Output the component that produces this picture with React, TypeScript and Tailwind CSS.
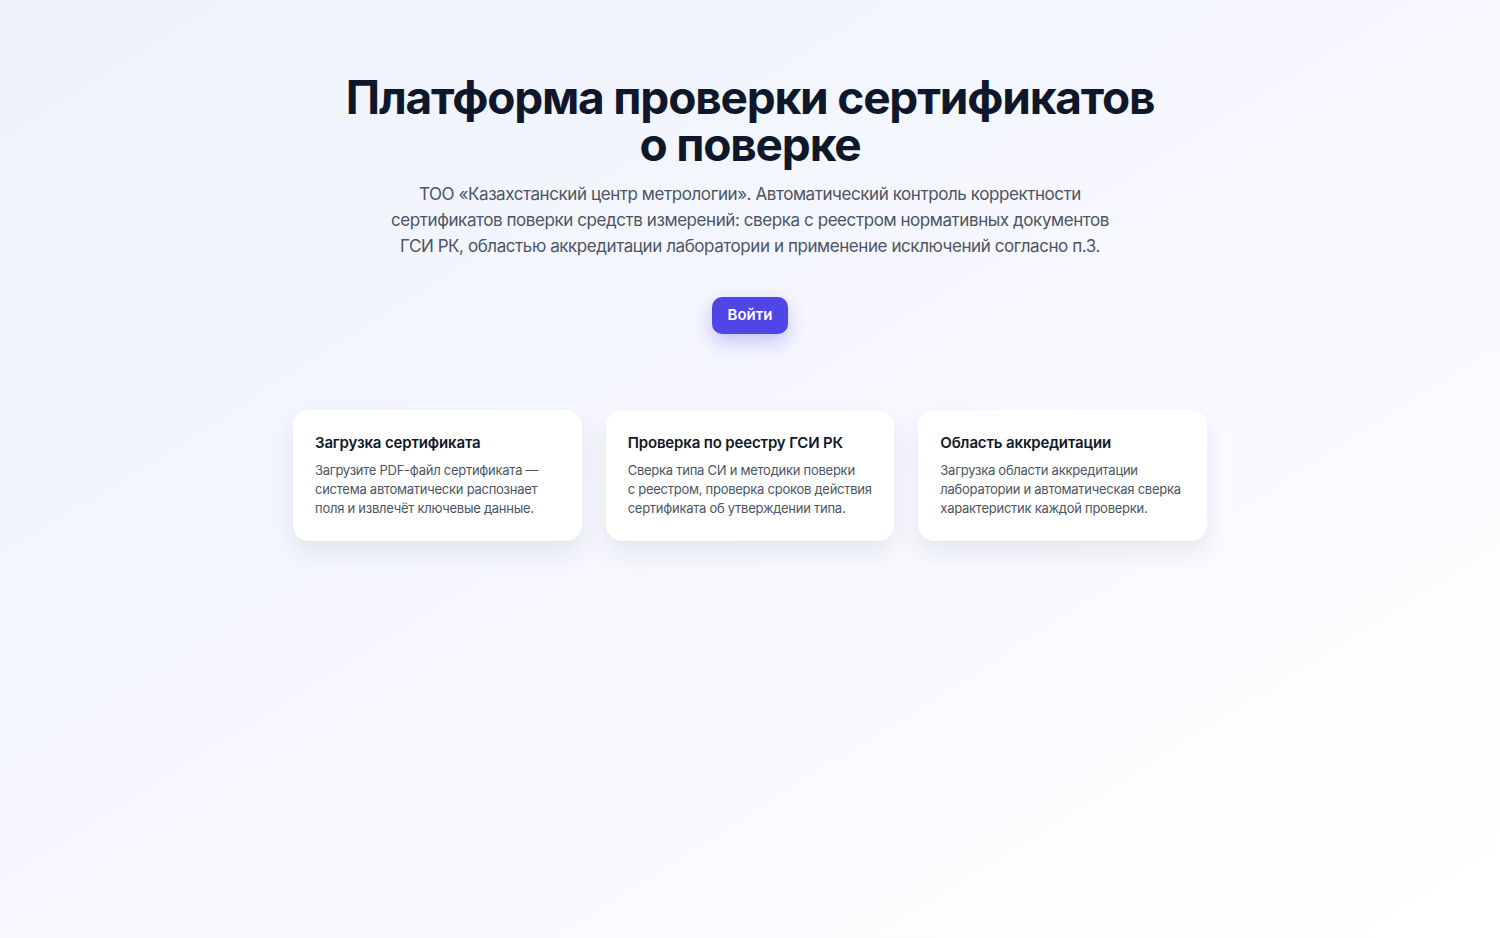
import React from "react";

const cards = [
  {
    title: "Загрузка сертификата",
    text: "Загрузите PDF-файл сертификата — система автоматически распознает поля и извлечёт ключевые данные.",
  },
  {
    title: "Проверка по реестру ГСИ РК",
    text: "Сверка типа СИ и методики поверки с\u00a0реестром, проверка сроков действия сертификата об утверждении типа.",
  },
  {
    title: "Область аккредитации",
    text: "Загрузка области аккредитации лаборатории и автоматическая сверка характеристик каждой проверки.",
  },
];

export default function App() {
  return (
    <div
      className="min-h-[938px] w-full bg-gradient-to-br from-[#eef1fc] via-[#f7f8fe] to-white"
      style={{ fontFamily: "Inter, 'Noto Sans', sans-serif" }}
    >
      <div className="flex flex-col items-center pt-[74px]">
        <h1 className="text-center text-[46px] font-bold leading-[47px] tracking-[-0.026em] text-[#0f172a]">
          Платформа проверки сертификатов
          <br />о поверке
        </h1>
        <p className="mt-[13px] max-w-[740px] text-center text-[17px] leading-[26px] tracking-[-0.025em] text-[#4b5563]">
          ТОО «Казахстанский центр метрологии». Автоматический контроль корректности сертификатов поверки
          средств измерений: сверка с реестром нормативных документов ГСИ РК, областью аккредитации
          лаборатории и применение исключений согласно п.3.
        </p>
        <button className="mt-[38px] h-[37px] rounded-[10px] bg-[#4f46e5] px-[16px] text-[15px] font-semibold text-white shadow-[0_8px_20px_rgba(79,70,229,0.3)]">
          Войти
        </button>
        <div className="mt-[76px] grid w-[914px] grid-cols-3 gap-[24px]">
          {cards.map((c) => (
            <div
              key={c.title}
              className="h-[131px] rounded-[16px] bg-white px-[22px] pt-[23px] shadow-[0_12px_24px_rgba(30,41,90,0.09)]"
            >
              <div className="text-[15px] font-semibold leading-[20px] tracking-[-0.01em] text-[#111827]">
                {c.title}
              </div>
              <div className="mt-[8px] text-[13px] leading-[19px] tracking-[-0.02em] text-[#4b5563]">
                {c.text}
              </div>
            </div>
          ))}
        </div>
      </div>
    </div>
  );
}
